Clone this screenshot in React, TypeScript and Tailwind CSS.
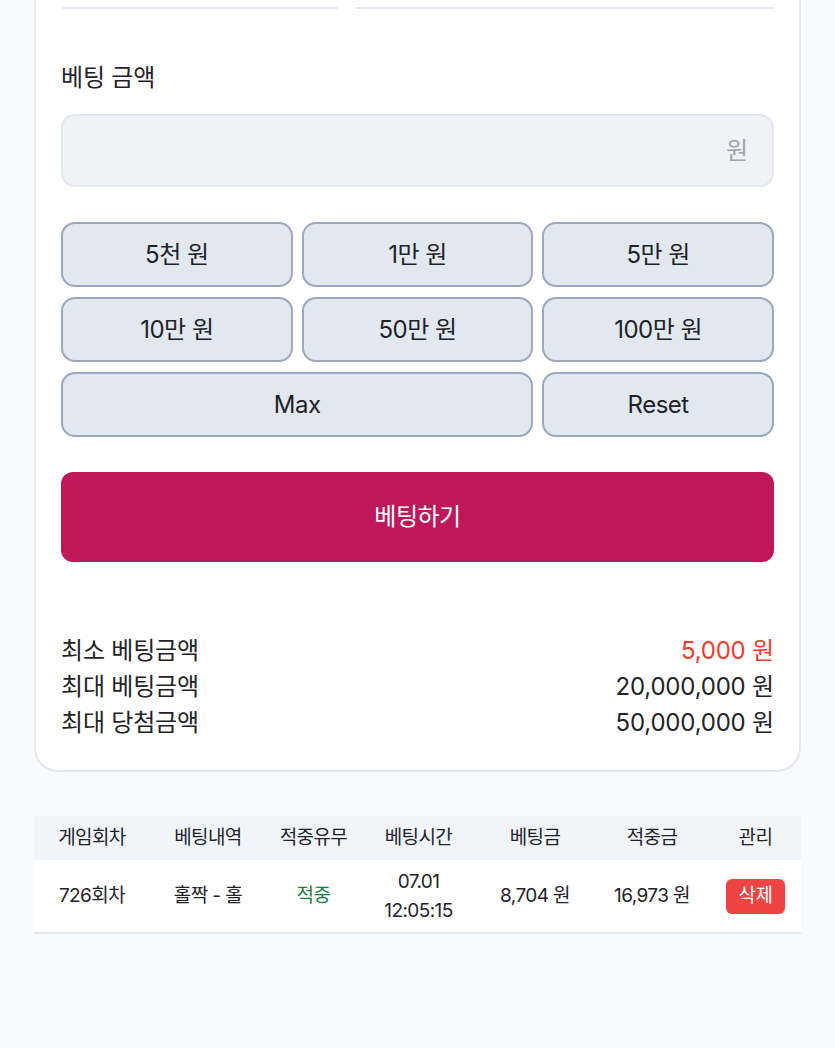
const AMOUNTS = ["5천 원", "1만 원", "5만 원", "10만 원", "50만 원", "100만 원"];

const LIMITS = [
  { label: "최소 베팅금액", value: "5,000 원", red: true },
  { label: "최대 베팅금액", value: "20,000,000 원" },
  { label: "최대 당첨금액", value: "50,000,000 원" },
];

const COLS = ["게임회차", "베팅내역", "적중유무", "베팅시간", "베팅금", "적중금", "관리"];

const chip =
  "flex h-[65px] items-center justify-center rounded-[14px] border-2 border-[#9aa9bf] bg-[#e2e8f0] text-[24px] tracking-[-0.5px] text-[#1f2329]";

export default function App() {
  return (
    <div
      className="min-h-[1048px] bg-[#f8fafc] px-[34px] text-[#1f2329]"
      style={{ fontFamily: 'Inter, "Noto Sans CJK KR", sans-serif' }}
    >
      <section className="rounded-b-[24px] border-2 border-t-0 border-[#e2e8f0] bg-white px-[25px] pb-[29px]">
        <div className="flex gap-[17px]">
          <div className="h-[9px] w-[278px] border-b-2 border-[#e2e8f0]" />
          <div className="h-[9px] flex-1 border-b-2 border-[#e2e8f0]" />
        </div>

        <h3 className="mt-[53px] text-[24px] leading-[32px] tracking-[-0.2px]">베팅 금액</h3>

        <div className="mt-[20px] flex h-[73px] items-center justify-end rounded-[14px] border-2 border-[#e2e8f0] bg-[#eff3f8] px-[24px] text-[24px] text-[#9ca3af]">
          원
        </div>

        <div className="mt-[35px] grid grid-cols-3 gap-x-[9px] gap-y-[10px]">
          {AMOUNTS.map((a) => (
            <button key={a} className={chip}>
              {a}
            </button>
          ))}
          <button className={`${chip} col-span-2`}>Max</button>
          <button className={chip}>Reset</button>
        </div>

        <button className="mt-[35px] flex h-[90px] w-full items-center justify-center rounded-[12px] bg-[#be185a] text-[24px] tracking-[-0.5px] text-white">
          베팅하기
        </button>

        <div className="mt-[71px]">
          {LIMITS.map((l) => (
            <div key={l.label} className="flex justify-between text-[24px] leading-[36px] tracking-[-0.2px]">
              <span>{l.label}</span>
              <span className={l.red ? "text-[#f23b2a]" : ""}>{l.value}</span>
            </div>
          ))}
        </div>
      </section>

      <table className="mt-[44px] w-full table-fixed border-b-2 border-[#e2e8f0] text-center text-[19px] tracking-[-0.6px]">
        <colgroup>
          <col className="w-[116px]" />
          <col className="w-[116px]" />
          <col className="w-[95px]" />
          <col className="w-[115px]" />
          <col className="w-[118px]" />
          <col className="w-[116px]" />
          <col />
        </colgroup>
        <thead>
          <tr className="h-[44px] bg-[#f1f5f9]">
            {COLS.map((c) => (
              <th key={c} className="font-normal">
                {c}
              </th>
            ))}
          </tr>
        </thead>
        <tbody>
          <tr className="h-[73px] bg-white">
            <td>726회차</td>
            <td>홀짝 - 홀</td>
            <td className="text-[#15803d]">적중</td>
            <td className="leading-[29px]">
              07.01
              <br />
              12:05:15
            </td>
            <td>8,704 원</td>
            <td>16,973 원</td>
            <td>
              <span className="inline-flex h-[35px] w-[59px] items-center justify-center rounded-[6px] bg-[#ef4444] text-white">
                삭제
              </span>
            </td>
          </tr>
        </tbody>
      </table>
    </div>
  );
}
